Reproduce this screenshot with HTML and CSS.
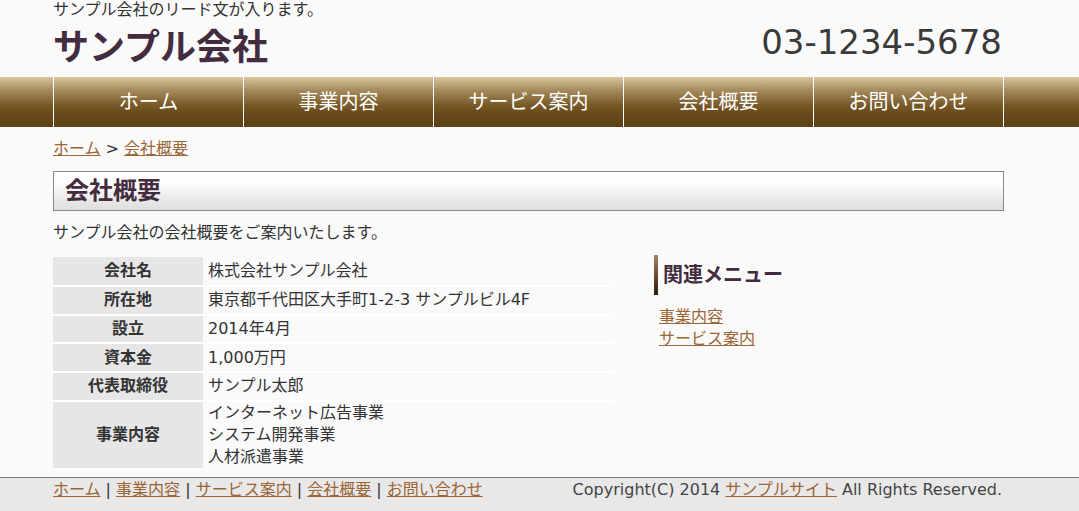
FILE: index.html
```html
<!DOCTYPE html>
<html lang="ja">
<head>
<meta charset="utf-8">
<title>会社概要 | サンプル会社</title>
<link rel="stylesheet" href="styles.css">
</head>
<body>
<header class="site-header">
  <div class="container header-inner">
    <div class="brand">
      <p class="lead">サンプル会社のリード文が入ります。</p>
      <h1 class="site-title">サンプル会社</h1>
    </div>
    <div class="phone">03-1234-5678</div>
  </div>
</header>
<nav class="global-nav">
  <ul class="container nav-list">
    <li><a href="#">ホーム</a></li>
    <li><a href="#">事業内容</a></li>
    <li><a href="#">サービス案内</a></li>
    <li><a href="#">会社概要</a></li>
    <li><a href="#">お問い合わせ</a></li>
  </ul>
</nav>
<div class="container page">
  <div class="breadcrumb"><a href="#">ホーム</a> &gt; <a href="#">会社概要</a></div>
  <h2 class="page-title">会社概要</h2>
  <div class="columns">
    <main class="main">
      <p class="intro">サンプル会社の会社概要をご案内いたします。</p>
      <table class="outline">
        <tr><th>会社名</th><td>株式会社サンプル会社</td></tr>
        <tr><th>所在地</th><td>東京都千代田区大手町1-2-3 サンプルビル4F</td></tr>
        <tr><th>設立</th><td>2014年4月</td></tr>
        <tr><th>資本金</th><td>1,000万円</td></tr>
        <tr><th>代表取締役</th><td>サンプル太郎</td></tr>
        <tr><th>事業内容</th><td>インターネット広告事業<br>システム開発事業<br>人材派遣事業</td></tr>
      </table>
    </main>
    <aside class="side">
      <h3 class="side-title">関連メニュー</h3>
      <ul class="side-links">
        <li><a href="#">事業内容</a></li>
        <li><a href="#">サービス案内</a></li>
      </ul>
    </aside>
  </div>
</div>
<footer class="site-footer">
  <div class="container footer-inner">
    <div class="footer-links"><a href="#">ホーム</a> | <a href="#">事業内容</a> | <a href="#">サービス案内</a> | <a href="#">会社概要</a> | <a href="#">お問い合わせ</a></div>
    <div class="copyright">Copyright(C) 2014 <a href="#">サンプルサイト</a> All Rights Reserved.</div>
  </div>
</footer>
</body>
</html>
```
FILE: styles.css
```css
* { box-sizing: border-box; }
html, body { margin: 0; padding: 0; }
body {
  background: #fafafa;
  color: #333;
  font-family: "DejaVu Sans", "Noto Sans CJK JP", sans-serif;
  font-size: 16px;
  line-height: 24px;
}
a { color: #9b6535; }
.container { width: 951px; margin-left: 53px; }

.site-header { padding-bottom: 7px; }
.header-inner { display: flex; justify-content: space-between; align-items: flex-start; }
.lead { margin: 0; font-size: 16px; line-height: 20px; color: #333; }
.site-title {
  margin: 6px 0 0;
  font-size: 36px;
  line-height: 44px;
  font-weight: bold;
  color: #422c3e;
}
.phone {
  padding-top: 20px;
  font-family: "DejaVu Sans", sans-serif;
  font-size: 34px;
  line-height: 44px;
  color: #3a3a3a;
  margin-right: 2px;
}

.global-nav {
  height: 50px;
  background: linear-gradient(#d9c79f 0%, #a88d60 25%, #7a5c2a 55%, #664819 75%, #5c4217 100%);
}
.nav-list {
  list-style: none;
  padding: 0;
  margin-top: 0;
  margin-bottom: 0;
  display: flex;
  height: 50px;
  border-left: 1px solid #fff;
}
.nav-list li { width: 190px; border-right: 1px solid #fff; }
.nav-list a {
  display: flex;
  height: 100%;
  align-items: center;
  justify-content: center;
  color: #fff;
  text-decoration: none;
  font-size: 20px;
}

.breadcrumb { margin-top: 10px; line-height: 24px; }
.page-title {
  margin: 10px 0 0;
  height: 40px;
  border: 1px solid #888;
  background: linear-gradient(#fff 0%, #fdfdfd 30%, #e8e8e8 75%, #dedede 100%);
  font-size: 24px;
  line-height: 38px;
  padding-left: 11px;
  color: #422c3e;
  font-weight: bold;
}

.columns { display: flex; }
.main { width: 601px; }
.intro { margin: 10px 0 0; }
.outline {
  margin-top: 12px;
  width: 560px;
  border-collapse: collapse;
}
.outline th, .outline td {
  height: 28.75px;
  padding: 0 5px;
  line-height: 22px;
  border-bottom: 2px solid #fff;
  vertical-align: middle;
}
.outline tr:last-child th, .outline tr:last-child td { border-bottom: 0; height: 66px; }
.outline th {
  width: 150px;
  background: #e6e6e6;
  font-weight: bold;
  text-align: center;
}
.outline td { padding-left: 5px; }

.side { flex: 1; padding-top: 44px; }
.side-title {
  margin: 0;
  height: 40px;
  line-height: 40px;
  border-left: 4px solid #7a5a3a;
  border-image: linear-gradient(#a88560, #2a1808) 1;
  padding-left: 5px;
  font-size: 20px;
  color: #422c3e;
  font-weight: bold;
}
.side-links { list-style: none; margin: 11px 0 0 5px; padding: 0; line-height: 22px; }

.site-footer {
  margin-top: 9px;
  background: #e8e8e8;
  border-top: 1px solid #777;
  height: 40px;
}
.footer-inner { display: flex; justify-content: space-between; line-height: 22px; padding-top: 1px; }
.copyright { color: #444; margin-right: 2px; }
```
